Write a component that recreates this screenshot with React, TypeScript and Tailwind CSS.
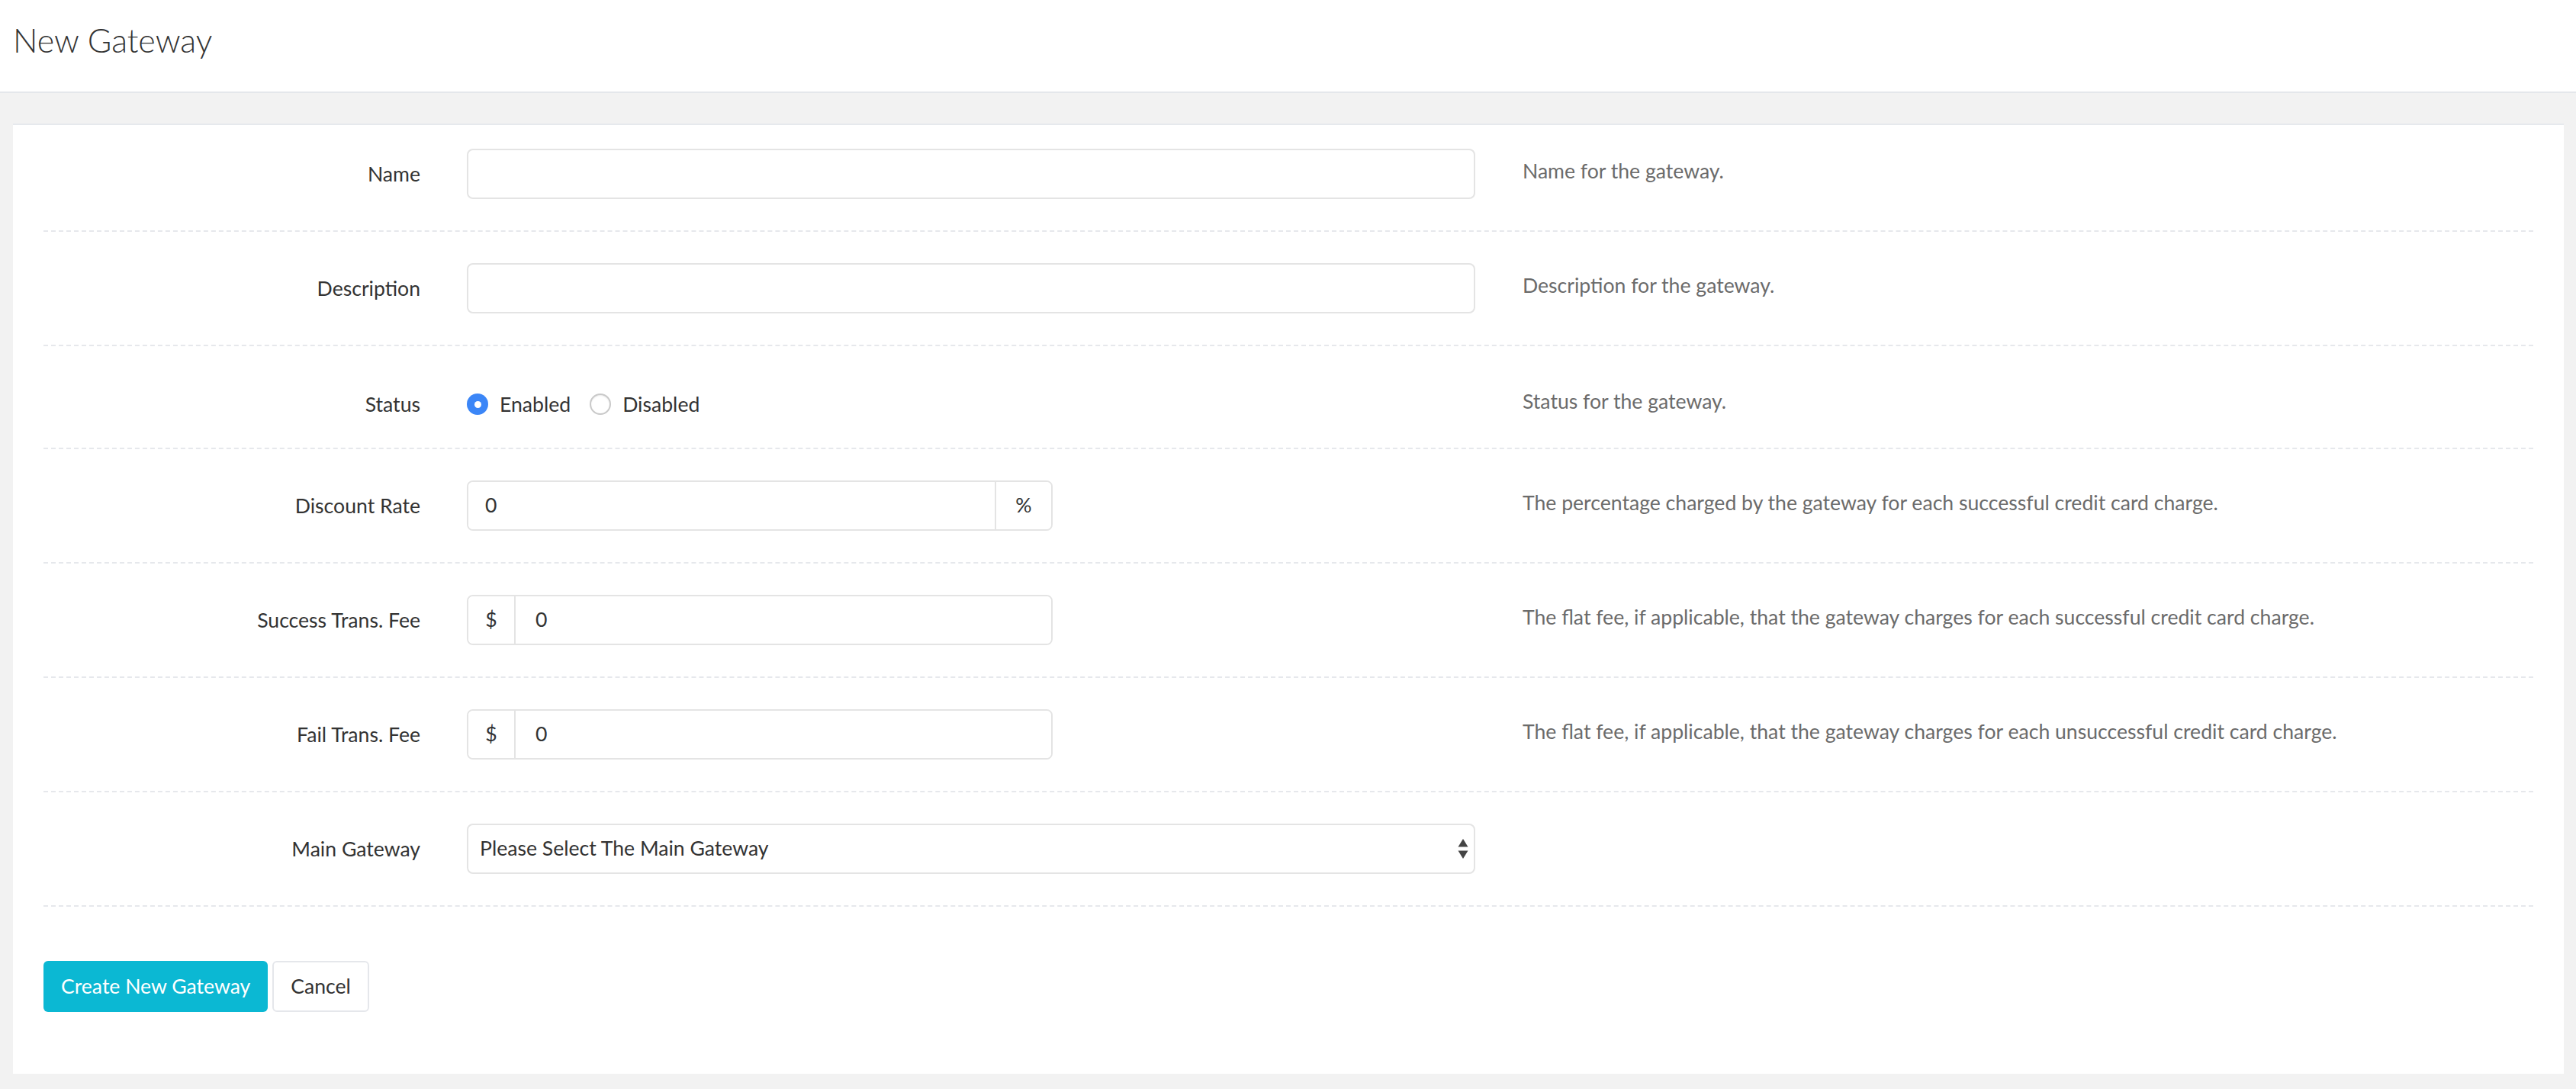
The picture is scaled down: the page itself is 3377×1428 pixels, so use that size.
import React from 'react';

type FieldRow = {
  label: string;
  help?: string;
  kind: 'text' | 'radio' | 'percent' | 'money' | 'select';
  value?: string;
};

const ROWS: readonly FieldRow[] = [
  { label: 'Name', help: 'Name for the gateway.', kind: 'text' },
  { label: 'Description', help: 'Description for the gateway.', kind: 'text' },
  { label: 'Status', help: 'Status for the gateway.', kind: 'radio' },
  {
    label: 'Discount Rate',
    help: 'The percentage charged by the gateway for each successful credit card charge.',
    kind: 'percent',
    value: '0'
  },
  {
    label: 'Success Trans. Fee',
    help: 'The flat fee, if applicable, that the gateway charges for each successful credit card charge.',
    kind: 'money',
    value: '0'
  },
  {
    label: 'Fail Trans. Fee',
    help: 'The flat fee, if applicable, that the gateway charges for each unsuccessful credit card charge.',
    kind: 'money',
    value: '0'
  },
  { label: 'Main Gateway', kind: 'select' }
] as const;

const inputBase =
  'h-[66px] bg-white border-2 border-[#e4e4e4] text-[26.6px] text-[#333] outline-none font-[inherit]';

const Radio = ({ checked, label }: { checked: boolean; label: string }) => (
  <label className="flex items-center gap-[15px]">
    {checked ? (
      <span className="w-[28px] h-[28px] rounded-full bg-[#3b86f7] flex items-center justify-center">
        <span className="w-[9px] h-[9px] rounded-full bg-white" />
      </span>
    ) : (
      <span className="w-[28px] h-[28px] rounded-full bg-white border-2 border-[#c9c9c9] shadow-[inset_0_1px_2px_rgba(0,0,0,0.08)]" />
    )}
    <span className="text-[26.6px] leading-none text-[#333]">{label}</span>
  </label>
);

const Control = ({ row }: { row: FieldRow }) => {
  switch (row.kind) {
    case 'text':
      return <input type="text" className={`${inputBase} w-full rounded-[8px] px-[22px]`} />;
    case 'radio':
      return (
        <div className="flex items-center gap-[25px] h-[28px]">
          <Radio checked label="Enabled" />
          <Radio checked={false} label="Disabled" />
        </div>
      );
    case 'percent':
      return (
        <div className="flex w-[768px] h-[66px] border-2 border-[#e4e4e4] rounded-[8px] overflow-hidden">
          <input
            type="text"
            readOnly
            value={row.value}
            className="flex-1 min-w-0 px-[22px] text-[26.6px] text-[#333] outline-none bg-white"
          />
          <span className="w-[74px] border-l-2 border-[#e4e4e4] flex items-center justify-center text-[26.6px] text-[#333] bg-white">
            %
          </span>
        </div>
      );
    case 'money':
      return (
        <div className="flex w-[768px] h-[66px] border-2 border-[#e4e4e4] rounded-[8px] overflow-hidden">
          <span className="w-[62px] border-r-2 border-[#e4e4e4] flex items-center justify-center text-[26.6px] text-[#333] bg-white">
            $
          </span>
          <input
            type="text"
            readOnly
            value={row.value}
            className="flex-1 min-w-0 px-[26px] text-[26.6px] text-[#333] outline-none bg-white"
          />
        </div>
      );
    case 'select':
      return (
        <div className="relative w-full">
          <select className={`${inputBase} w-full rounded-[8px] pl-[15px] pr-[40px] appearance-none`}>
            <option>Please Select The Main Gateway</option>
          </select>
          <svg
            className="absolute right-[9px] top-[20px] pointer-events-none"
            width="14"
            height="27"
            viewBox="0 0 14 27"
          >
            <path d="M7 0 L13.5 10.5 L0.5 10.5 Z" fill="#444" />
            <path d="M0.5 15.5 L13.5 15.5 L7 26 Z" fill="#444" />
          </svg>
        </div>
      );
  }
};

const App: React.FC = () => {
  return (
    <div className="min-h-screen bg-[#f2f2f2] font-['Lato','Noto_Sans',sans-serif]">
      {/* Page header */}
      <header className="h-[122px] bg-white border-b-2 border-[#e4e7eb] pl-[17px] pt-[31px]">
        <h1 className="text-[43px] leading-none font-light text-[#333]">New Gateway</h1>
      </header>

      <main className="pt-[40px] pl-[17px] pr-[16px] pb-[20px]">
        <div className="bg-white border-t-2 border-[#e6e9ed] px-[40px] pb-[81px]">
          {ROWS.map((row, index) => {
            const pad =
              row.kind === 'radio'
                ? 'pt-[62px] pb-[43px]'
                : index === 0
                  ? 'pt-[31px] pb-[41px]'
                  : 'pt-[41px] pb-[41px]';
            return (
              <div
                key={row.label}
                className={`flex items-center border-b-2 border-dashed border-[#e6e8ec] ${pad}`}
              >
                <div className="w-[494px] shrink-0 text-right text-[26.6px] leading-none text-[#333]">
                  {row.label}
                </div>
                <div className="w-[1322px] shrink-0 ml-[61px]">
                  <Control row={row} />
                </div>
                {row.help && (
                  <div className="relative -top-[4px] ml-[62px] text-[26.6px] leading-none text-[#6b6b6b]">
                    {row.help}
                  </div>
                )}
              </div>
            );
          })}

          {/* Actions */}
          <div className="flex gap-[6px] mt-[71px]">
            <button className="h-[67px] px-[23px] rounded-[6px] bg-[#0bb8d3] text-white text-[26.6px]">
              Create New Gateway
            </button>
            <button className="h-[67px] px-[22px] rounded-[6px] bg-white border-2 border-[#e5e7eb] text-[#333] text-[26.6px]">
              Cancel
            </button>
          </div>
        </div>
      </main>
    </div>
  );
};

export default App;
